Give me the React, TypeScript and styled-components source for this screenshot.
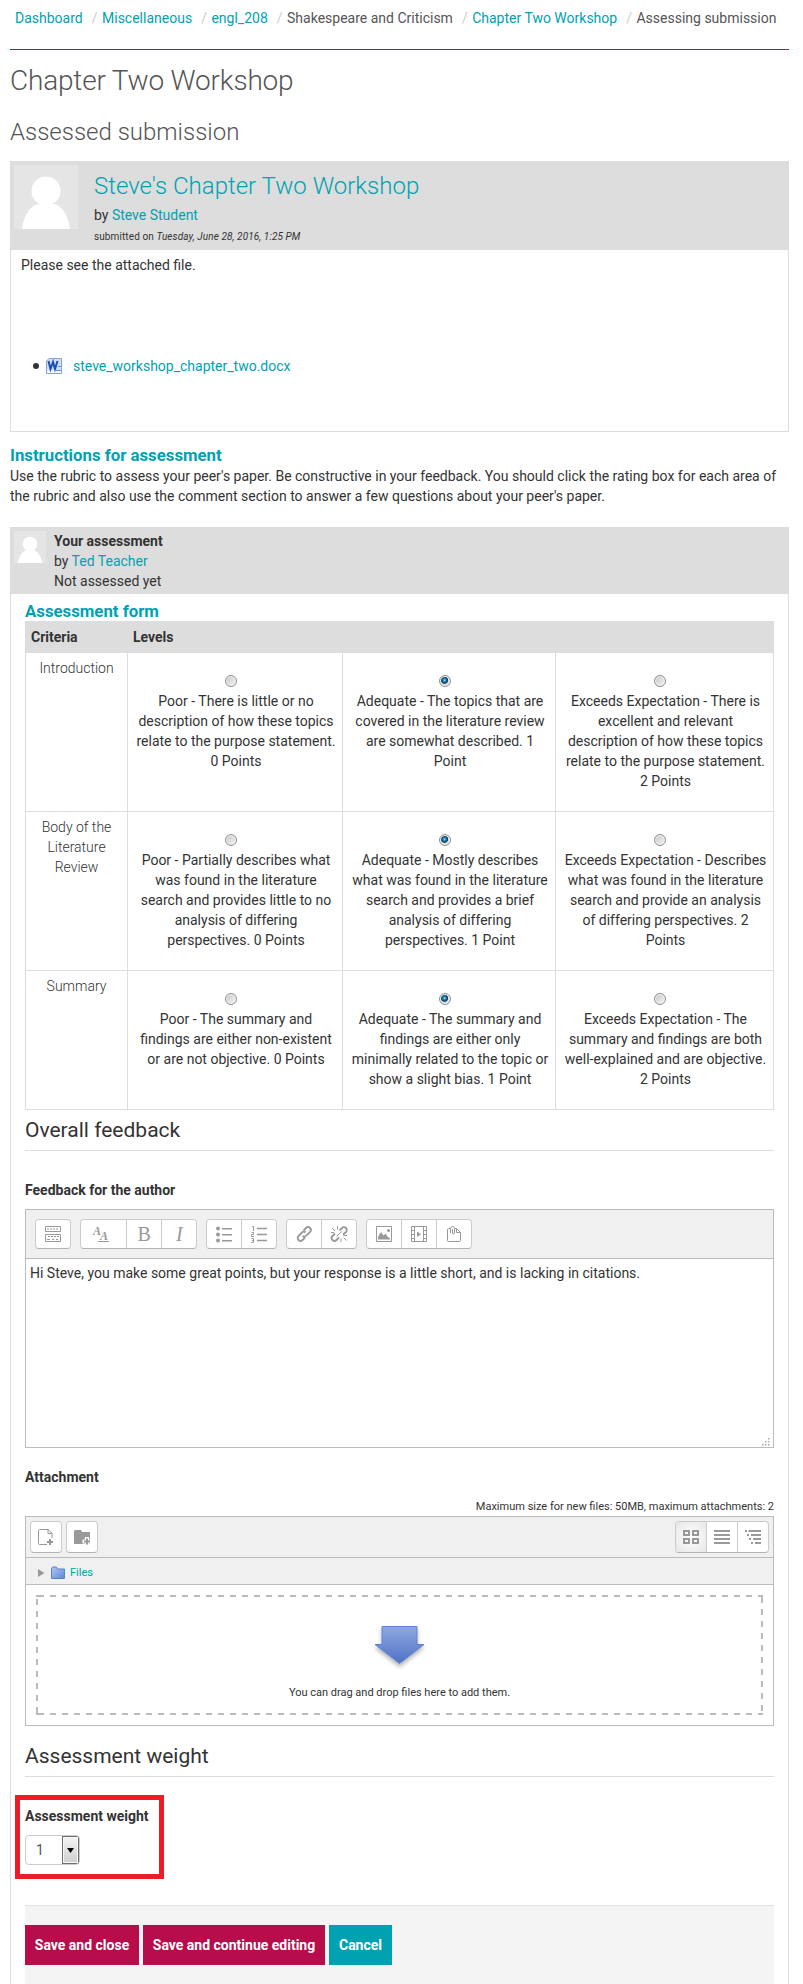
import React from 'react';
import styled, { createGlobalStyle, css } from 'styled-components';

const teal = '#00a2b1';
const crimson = '#b70e4b';

const Global = createGlobalStyle`
  *, *::before, *::after { box-sizing: border-box; }
  html, body { margin: 0; background: #fff; }
  body { font: 14px/20px Roboto, sans-serif; color: #333; overflow: hidden; }
  h1, h2, h3, h4, p, ul { margin: 0; font-weight: 300; }
`;

const Page = styled.main`width: 803px; height: 1984px; overflow: hidden; padding: 0 14px 0 10px;`;
const Link = styled.span`color: ${teal};`;

const Breadcrumb = styled.nav`
  display: flex; height: 50px; padding: 8px 0 0 5px; white-space: nowrap;
  border-bottom: 1px solid ${crimson}; color: #555;
`;
const Crumb = styled.span<{ $link?: boolean }>`
  color: ${p => (p.$link ? teal : '#555')};
  &:not(:first-child)::before { content: '/'; color: #ccc; padding: 0 4.5px 0 9px; }
`;
const PageTitle = styled.h1`margin-top: 11px; font-size: 28px; line-height: 40px; letter-spacing: -0.19px; color: #555;`;
const SubTitle = styled.h2`margin-top: 11px; font-size: 24px; line-height: 40px; color: #555;`;

const Submission = styled.section`margin-top: 9px; height: 271px; border: 1px solid #ddd;`;
const SubmissionHead = styled.header`display: flex; gap: 16px; height: 88px; padding: 3px; background: #ddd;`;
const SubmissionMeta = styled.div`padding-top: 1px;`;
const SubmissionTitle = styled.h3`margin-bottom: -1px; font-size: 24px; line-height: 40px; color: ${teal};`;
const Submitted = styled.div`margin-top: 2px; font-size: 10px; letter-spacing: 0.1px; color: #333;`;
const SubmissionText = styled.p`padding: 5px 10px 0; font-weight: 400;`;
const FileList = styled.ul`
  display: flex; align-items: center; margin-top: 81px; padding-left: 22px; list-style: none; font-weight: 400;
`;
const Bullet = styled.i`width: 6px; height: 6px; border-radius: 3px; background: #333;`;
const FileIcon = styled.svg`margin: 0 11px 0 7px;`;

const Heading = styled.h3`font-size: 16.8px; line-height: 20px; font-weight: 700; color: ${teal};`;
const Instructions = styled.section`
  margin-top: 13px;
  ${Heading} { margin-bottom: 1px; }
`;

const Assessment = styled.section`margin-top: 21px; height: 1500px; border: 1px solid #ddd;`;
const AssessmentHead = styled.header`display: flex; gap: 8px; height: 66px; padding: 3px; background: #ddd;`;
const AssessmentBody = styled.div`padding: 7px 14px 0;`;

const Rubric = styled.div`width: 749px; border: 1px solid #ddd;`;
const RubricHead = styled.div`
  display: grid; grid-template-columns: 102px 1fr; height: 31px; align-items: center;
  padding: 0 0 1px 5px; background: #ddd; font-weight: 700;
`;
const RubricRow = styled.div<{ $h: number }>`
  display: grid; grid-template-columns: 101px 215px 213px 218px; height: ${p => p.$h}px;
  & + & { border-top: 1px solid #ddd; }
`;
const Criterion = styled.div`padding: 5px 12px; text-align: center; font-weight: 300;`;
const Level = styled.div`
  border-left: 1px solid #ddd; display: flex; flex-direction: column; align-items: center; padding-top: 22px;
`;
const LevelText = styled.div`margin-top: 4px; width: 100%; text-align: center; white-space: pre; padding-left: 2px;`;
const Radio = styled.span<{ $on?: boolean }>`
  width: 12px; height: 12px; margin-right: 9px; border-radius: 50%; border: 1px solid #8e8f8f;
  box-shadow: inset 0 0 0 1px #f4f4f4;
  background: ${p => p.$on
    ? 'radial-gradient(circle at 45% 42%, #9fe0f5 0, #2389bd 1.4px, #0e3c60 3.2px, #d9dcde 4px)'
    : 'linear-gradient(135deg, #c2c6ca, #f6f6f6)'};
`;

const Legend = styled.h3<{ $gap?: number }>`
  height: 41px; margin-top: ${p => p.$gap ?? 0}px; padding-top: 10px; font-size: 21px; line-height: 20px; color: #333; font-weight: 400;
  border-bottom: 1px solid #ddd;
`;
const Label = styled.div`font-weight: 700;`;

const Editor = styled.div`margin-top: 9px; width: 749px; height: 239px; border: 1px solid #bbb; display: flex; flex-direction: column;`;
const EditorBar = styled.div`height: 49px; padding: 9px; display: flex; gap: 9px; background: #f0f0f0; border-bottom: 1px solid #bbb;`;
const Group = styled.div<{ $h: number }>`
  display: flex; height: ${p => p.$h}px; border: 1px solid #ccc; border-bottom-color: #b3b3b3; border-radius: 4px;
  background: #fff;
`;
const Tool = styled.span<{ $w: number; $active?: boolean }>`
  width: ${p => p.$w}px; display: flex; align-items: center; justify-content: center;
  &:not(:first-child) { border-left: 1px solid #ccc; }
  ${p => p.$active && css`background: radial-gradient(#fff, #e6e6e6); border-radius: 3px 0 0 3px;`}
`;
const EditorText = styled.div`flex: 1; padding: 4px 4px;`;
const Grip = styled.svg`align-self: flex-end; margin: 0 3px 1px 0;`;

const SizeNote = styled.div`margin-bottom: -1px; text-align: right; font-size: 11px; line-height: 20px;`;
const Picker = styled.div`width: 749px; border: 1px solid #bbb;`;
const PickerBar = styled.div`display: flex; justify-content: space-between; height: 41px; padding: 4px 4px 0; background: #f0f0f0; border-bottom: 1px solid #bbb;`;
const PickerSet = styled.div`display: flex; gap: 4px;`;
const PathBar = styled.div`display: flex; align-items: center; height: 27px; padding: 3px 0 0 12px; background: #f0f0f0; border-bottom: 1px solid #bbb; font-size: 11px;
  ${Link} { padding-top: 1px; }
`;
const DropWrap = styled.div`height: 140px; padding: 10px;`;
const DropZone = styled.div`
  height: 120px; display: flex; flex-direction: column; align-items: center; font-size: 11px; padding-top: 30px;
  background:
    linear-gradient(#bbb, #bbb) 0 0 / 2px 2px no-repeat,
    linear-gradient(#bbb, #bbb) 0 100% / 2px 2px no-repeat,
    repeating-linear-gradient(90deg, #bbb 0 6px, transparent 6px 12px) 2px 0 / 100% 2px no-repeat,
    repeating-linear-gradient(90deg, #bbb 0 6px, transparent 6px 12px) 2px 100% / 100% 2px no-repeat,
    repeating-linear-gradient(180deg, #bbb 0 6px, transparent 6px 12px) 0 4px / 2px 100% no-repeat,
    repeating-linear-gradient(180deg, #bbb 0 6px, transparent 6px 12px) 100% 2px / 2px 100% no-repeat;
`;

const Highlight = styled.div`
  width: 149px; height: 84px; margin: 18px 0 0 -10px; border: 5px solid #ee1c25; padding: 6px 5px 0;
`;
const Select = styled.div`
  width: 55px; height: 30px; margin-top: 9px; display: flex; align-items: center; justify-content: space-between;
  border: 1px solid #ccc; border-radius: 4px; padding-left: 10px; color: #555; overflow: hidden;
`;
const SelectArrow = styled.span`
  width: 17px; height: 28px; border: 1px solid #707070; background: linear-gradient(#f4f4f4, #cfcfcf);
  box-shadow: inset 0 0 0 1px #f8f8f8; display: flex; align-items: center; justify-content: center;
`;
const Footer = styled.footer`
  display: flex; gap: 4px; align-items: flex-start; width: 749px; height: 100px; margin-top: 26px; padding-top: 19px;
  background: #f4f4f4; border-top: 1px solid #e3e3e3;
`;
const Button = styled.button<{ $w: number; $teal?: boolean }>`
  width: ${p => p.$w}px; height: 40px; padding: 0; border: 0; background: ${p => (p.$teal ? teal : crimson)};
  color: #fff; font: 700 14px/20px Roboto, sans-serif; white-space: nowrap;
`;
const Glyph = styled.svg`overflow: visible; flex: none;`;

const Avatar = ({ size }: { size: number }) => (
  <svg width={size} height={size} viewBox="0 0 64 64">
    <rect width="64" height="64" fill="#e5e5e5" />
    <ellipse cx="32" cy="26" rx="14.5" ry="14.5" fill="#fff" />
    <path d="M8 64C10 49 17 39 27 38.500H37C47 39 54 49 56 64Z" fill="#fff" />
  </svg>
);

const icons: Record<string, React.ReactNode> = {
  toggle: <g fill="none" stroke="#999"><path d="M.5.5h15v5H.5zM.5 8.500h15v7H.5z" /><path d="M2 3h12M3 10.500h11" strokeDasharray="2 1" /><path d="M2 13.500h3M7 13.500h2M11 13.500h2" /></g>,
  style: <g fill="#999" fontFamily="Liberation Serif, serif" fontStyle="italic"><text x="-3" y="9" fontSize="12" fontWeight="700">A</text><text x="4" y="14" fontSize="12" fontWeight="700">A</text><path d="M2 15h11v1H2z" /></g>,
  bold: <text x="1.500" y="14.500" fontSize="20" fill="#999" fontFamily="Liberation Serif, serif">B</text>,
  italic: <text x="5" y="14.500" fontSize="20" fill="#999" fontFamily="Liberation Serif, serif" fontStyle="italic">I</text>,
  ul: <g fill="#999"><circle cx="2" cy="2.500" r="2" /><circle cx="2" cy="8.500" r="2" /><circle cx="2" cy="14.500" r="2" /><path d="M6 2h10v1.500H6zM6 8h10v1.500H6zM6 14h10v1.500H6z" /></g>,
  ol: <g fill="none" stroke="#999"><path d="M6 2.500h10M6 8.500h10M6 14.500h10" strokeWidth="1.500" /><path d="M1 .5h1.500V5M.5 6.500h2V8.500h-2V10.500H3M.5 12.500h2v4h-2M1 14.500h1.500" /></g>,
  link: <g fill="none" stroke="#999" strokeWidth="1.800"><path d="M7.500 4.500L10 2a2.500 2.500 0 0 1 4 4L10 9.800a2.500 2.500 0 0 1-3.500 0" /><path d="M9 11.500L6.500 14a2.500 2.500 0 0 1-4-4L6 6.500a2.500 2.500 0 0 1 3.500 0" /></g>,
  unlink: <g fill="none" stroke="#999"><path strokeWidth="1.800" d="M8.500 4.500L11 2a2.500 2.500 0 0 1 4 4L12 8.500M8 11.500L5.500 14a2.500 2.500 0 0 1-4-4L4 7.500" /><path d="M5.500 10.500l5-5M1 2l3 3M6.500 0v3.500M0 6.500h3M12.500 11.500l3 3M10 12.500V16M12.500 9.500H16" /></g>,
  image: <g><path d="M.5.5h15v15H.5z" fill="none" stroke="#999" /><path d="M2 13.500V11l3-5 2.500 3.500 2-2 2 3 2.500 2v1z" fill="#999" /><circle cx="12.500" cy="4.500" r="1.500" fill="#999" /></g>,
  media: <g fill="none" stroke="#999"><path d="M.5.5h15v15H.5zM3.500 0v16M12.500 0v16" /><path d="M0 4.500h3.500M0 8.500h3.500M0 12.500h3.500M12.500 4.500H16M12.500 8.500H16M12.500 12.500H16" /><path d="M6 5.500v5.500l4-2.700z" fill="#999" stroke="none" /></g>,
  manage: <g fill="none" stroke="#999"><path d="M4 2.500H2.500a1 1 0 0 0-1 1v11a1 1 0 0 0 1 1h11a1 1 0 0 0 1-1V6.500l-4-4H9M10.500 2.500v4h4" /><path d="M4.500 7V2.500a2 2 0 0 1 4 0V7a1 1 0 0 1-2 0V3" /></g>,
  addFile: <g fill="none" stroke="#999"><path d="M9 15.500H1.500a1 1 0 0 1-1-1V1.500a1 1 0 0 1 1-1h8.500l4 3.500V9M10 .5V4.500h4" /><path d="M12 10v6M9 13h6" strokeWidth="2" /></g>,
  addFolder: <g><path d="M0 2l1-1h6l1 2h8v12H0z" fill="#999" /><path d="M13 8v9M8.500 12.500H17" stroke="#fff" strokeWidth="4" /><path d="M13 9.500v6M10 12.500h6" stroke="#999" strokeWidth="2" /></g>,
  grid: <path d="M1 2h5v4H1zM10 2h5v4h-5zM1 10h5v4H1zM10 10h5v4h-5z" fill="none" stroke="#999" strokeWidth="2" />,
  list: <path d="M0 1h16v2H0zM0 5h16v2H0zM0 9h16v2H0zM0 13h16v2H0z" fill="#999" />,
  tree: <path d="M0 1h2v2H0zM3.500 1H16v2H3.500zM2 5h2v2H2zM6 5h10v2H6zM4 9h2v2H4zM8 9h8v2H8zM6 13h2v2H6zM10 13h6v2h-6z" fill="#999" />,
};
const Icon = ({ name }: { name: string }) => <Glyph width="16" height="17" viewBox="0 0 16 17">{icons[name]}</Glyph>;

const crumbs: [string, boolean][] = [
  ['Dashboard', true], ['Miscellaneous', true], ['engl_208', true],
  ['Shakespeare and Criticism', false], ['Chapter Two Workshop', true], ['Assessing submission', false],
];

const rows = [
  { h: 158, name: 'Introduction', levels: [
    'Poor - There is little or no\ndescription of how these topics\nrelate to the purpose statement.\n0 Points',
    'Adequate - The topics that are\ncovered in the literature review\nare somewhat described. 1\nPoint',
    'Exceeds Expectation - There is\nexcellent and relevant\ndescription of how these topics\nrelate to the purpose statement.\n2 Points'] },
  { h: 159, name: 'Body of the Literature Review', levels: [
    'Poor - Partially describes what\nwas found in the literature\nsearch and provides little to no\nanalysis of differing\nperspectives. 0 Points',
    'Adequate - Mostly describes\nwhat was found in the literature\nsearch and provides a brief\nanalysis of differing\nperspectives. 1 Point',
    'Exceeds Expectation - Describes\nwhat was found in the literature\nsearch and provide an analysis\nof differing perspectives. 2\nPoints'] },
  { h: 139, name: 'Summary', levels: [
    'Poor - The summary and\nfindings are either non-existent\nor are not objective. 0 Points',
    'Adequate - The summary and\nfindings are either only\nminimally related to the topic or\nshow a slight bias. 1 Point',
    'Exceeds Expectation - The\nsummary and findings are both\nwell-explained and are objective.\n2 Points'] },
];

const tools: [string, number][][] = [
  [['toggle', 34]], [['style', 45], ['bold', 35], ['italic', 35]], [['ul', 34], ['ol', 35]],
  [['link', 34], ['unlink', 35]], [['image', 34], ['media', 35], ['manage', 35]],
];

const Spaced = styled.div<{ $top: number }>`margin-top: ${p => p.$top}px;`;

export default function App() {
  return (
    <Page>
      <Global />
      <Breadcrumb>{crumbs.map(([t, l]) => <Crumb key={t} $link={l}>{t}</Crumb>)}</Breadcrumb>
      <PageTitle>Chapter Two Workshop</PageTitle>
      <SubTitle>Assessed submission</SubTitle>
      <Submission>
        <SubmissionHead>
          <Avatar size={64} />
          <SubmissionMeta>
            <SubmissionTitle>Steve's Chapter Two Workshop</SubmissionTitle>
            <div>by <Link>Steve Student</Link></div>
            <Submitted>submitted on <em>Tuesday, June 28, 2016, 1:25 PM</em></Submitted>
          </SubmissionMeta>
        </SubmissionHead>
        <SubmissionText>Please see the attached file.</SubmissionText>
        <FileList>
          <Bullet />
          <FileIcon width="16" height="16" viewBox="0 0 16 16">
            <path d="M3 .5h12.500v15H.5V3z" fill="#cfdff5" stroke="#86a3d0" />
            <path d="M1 12h14v3H1z" fill="#f4f7fc" />
            <path d="M2.500 3L4.500 11 7 4l2 7 2.500-8" fill="none" stroke="#1c4fb0" strokeWidth="2" />
            <path d="M12 8.500h3M10 12.500h5" stroke="#6f8fc8" />
          </FileIcon>
          <Link>steve_workshop_chapter_two.docx</Link>
        </FileList>
      </Submission>
      <Instructions>
        <Heading>Instructions for assessment</Heading>
        <div>Use the rubric to assess your peer's paper. Be constructive in your feedback. You should click the rating box for each area of the rubric and also use the comment section to answer a few questions about your peer's paper.</div>
      </Instructions>
      <Assessment>
        <AssessmentHead>
          <Avatar size={32} />
          <div><Label>Your assessment</Label><div>by <Link>Ted Teacher</Link></div><div>Not assessed yet</div></div>
        </AssessmentHead>
        <AssessmentBody>
          <Heading>Assessment form</Heading>
          <Rubric>
            <RubricHead><span>Criteria</span><span>Levels</span></RubricHead>
            {rows.map(r => (
              <RubricRow key={r.name} $h={r.h}>
                <Criterion>{r.name}</Criterion>
                {r.levels.map((t, i) => (
                  <Level key={i}><Radio $on={i === 1} /><LevelText>{t}</LevelText></Level>
                ))}
              </RubricRow>
            ))}
          </Rubric>
          <Legend>Overall feedback</Legend>
          <Spaced $top={29}><Label>Feedback for the author</Label></Spaced>
          <Editor>
            <EditorBar>
              {tools.map((g, i) => (
                <Group key={i} $h={30}>{g.map(([n, w]) => <Tool key={n} $w={w}><Icon name={n} /></Tool>)}</Group>
              ))}
            </EditorBar>
            <EditorText>Hi Steve, you make some great points, but your response is a little short, and is lacking in citations.</EditorText>
            <Grip width="8" height="8" viewBox="0 0 8 8" fill="#aaa">
              <path d="M6 0h1.500v1.500H6zM6 3h1.500v1.500H6zM6 6h1.500v1.500H6zM3 3h1.500v1.500H3zM3 6h1.500v1.500H3zM0 6h1.500v1.500H0z" />
            </Grip>
          </Editor>
          <Spaced $top={19}><Label>Attachment</Label></Spaced>
          <Spaced $top={10}><SizeNote>Maximum size for new files: 50MB, maximum attachments: 2</SizeNote></Spaced>
          <Picker>
            <PickerBar>
              <PickerSet>
                <Group $h={32}><Tool $w={30}><Icon name="addFile" /></Tool></Group>
                <Group $h={32}><Tool $w={30}><Icon name="addFolder" /></Tool></Group>
              </PickerSet>
              <Group $h={32}>
                <Tool $w={30} $active><Icon name="grid" /></Tool>
                <Tool $w={31}><Icon name="list" /></Tool>
                <Tool $w={31}><Icon name="tree" /></Tool>
              </Group>
            </PickerBar>
            <PathBar>
              <svg width="32" height="14" viewBox="0 0 32 14">
                <defs>
                  <linearGradient id="folder" x1="0" y1="0" x2="1" y2="1"><stop offset="0" stopColor="#b4caf2" /><stop offset="1" stopColor="#5c84d8" /></linearGradient>
                </defs>
                <path d="M0 3l6.500 4L0 11z" fill="#999" />
                <path d="M13.500 3l1-2h4l1 2h7v9.500h-13z" fill="url(#folder)" stroke="#5b80cc" />
              </svg>
              <Link>Files</Link>
            </PathBar>
            <DropWrap>
              <DropZone>
                <svg width="54" height="50" viewBox="0 0 54 50">
                  <defs>
                    <linearGradient id="arrow" x1="0" y1="0" x2="0" y2="1"><stop offset="0" stopColor="#8fa8e0" /><stop offset="1" stopColor="#5073c6" /></linearGradient>
                    <filter id="shadow" x="-20%" y="-20%" width="140%" height="150%"><feDropShadow dx="0" dy="3" stdDeviation="2" floodOpacity=".3" /></filter>
                  </defs>
                  <path d="M9 1.500h35v18h7L26.500 38.500 2 19.500h7z" fill="url(#arrow)" stroke="#5f80d0" filter="url(#shadow)" />
                </svg>
                <Spaced $top={8}>You can drag and drop files here to add them.</Spaced>
              </DropZone>
            </DropWrap>
          </Picker>
          <Legend $gap={10}>Assessment weight</Legend>
          <Highlight>
            <Label>Assessment weight</Label>
            <Select>1<SelectArrow><svg width="7" height="5"><path d="M0 0h7L3.500 5z" /></svg></SelectArrow></Select>
          </Highlight>
          <Footer>
            <Button $w={114}>Save and close</Button>
            <Button $w={182}>Save and continue editing</Button>
            <Button $w={63} $teal>Cancel</Button>
          </Footer>
        </AssessmentBody>
      </Assessment>
    </Page>
  );
}
